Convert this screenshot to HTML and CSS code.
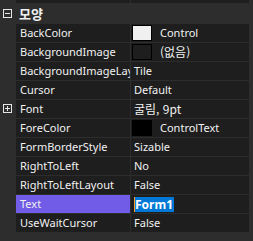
FILE: index.html
```html
<!DOCTYPE html>
<html lang="ko">
<head>
    <meta charset="UTF-8">
    <title>속성</title>
    <link rel="stylesheet" href="styles.css">
</head>
<body>
    <div class="grid">
        <div class="row partial">
            <div class="gutter"></div>
            <div class="name"></div>
            <div class="value"></div>
        </div>

        <div class="category">
            <span class="toggle minus"></span>
            <span class="cat-label">모양</span>
        </div>

        <div class="row">
            <div class="gutter"></div>
            <div class="name">BackColor</div>
            <div class="value"><span class="swatch light"></span>Control</div>
        </div>
        <div class="row">
            <div class="gutter"></div>
            <div class="name">BackgroundImage</div>
            <div class="value"><span class="swatch empty"></span><span class="ko">(없음)</span></div>
        </div>
        <div class="row">
            <div class="gutter"></div>
            <div class="name">BackgroundImageLayout</div>
            <div class="value">Tile</div>
        </div>
        <div class="row">
            <div class="gutter"></div>
            <div class="name">Cursor</div>
            <div class="value">Default</div>
        </div>
        <div class="row">
            <div class="gutter"><span class="toggle plus"></span></div>
            <div class="name">Font</div>
            <div class="value"><span class="ko">굴림, 9pt</span></div>
        </div>
        <div class="row">
            <div class="gutter"></div>
            <div class="name">ForeColor</div>
            <div class="value"><span class="swatch dark"></span>ControlText</div>
        </div>
        <div class="row">
            <div class="gutter"></div>
            <div class="name">FormBorderStyle</div>
            <div class="value">Sizable</div>
        </div>
        <div class="row">
            <div class="gutter"></div>
            <div class="name">RightToLeft</div>
            <div class="value">No</div>
        </div>
        <div class="row">
            <div class="gutter"></div>
            <div class="name">RightToLeftLayout</div>
            <div class="value">False</div>
        </div>
        <div class="row selected">
            <div class="gutter"></div>
            <div class="name">Text</div>
            <div class="value"><span class="edit">Form1</span></div>
        </div>
        <div class="row">
            <div class="gutter"></div>
            <div class="name">UseWaitCursor</div>
            <div class="value">False</div>
        </div>
    </div>
</body>
</html>
```

FILE: styles.css
```css
body {
    margin: 0;
    padding: 0;
    background: #2d2d2d;
    font-family: 'Noto Sans', 'Noto Sans CJK KR', sans-serif;
    font-size: 11px;
    color: #f1f1f1;
    overflow: hidden;
}

.grid {
    display: flex;
    flex-direction: column;
    gap: 1px;
    width: 253px;
    height: 241px;
}

.row {
    display: grid;
    grid-template-columns: 15px 114px 118px;
    column-gap: 1px;
    height: 18px;
    line-height: 18px;
}

.row.partial {
    height: 3px;
}

.gutter {
    background: #2d2d2d;
    position: relative;
}

.name,
.value {
    background: #1e1e1e;
    white-space: nowrap;
    overflow: hidden;
}

.name {
    padding-left: 4px;
}

.value {
    padding-left: 3px;
    display: flex;
    align-items: center;
}

.ko {
    font-family: 'Noto Sans CJK KR', sans-serif;
    font-size: 12px;
}

.category {
    height: 19px;
    display: flex;
    align-items: center;
    position: relative;
}

.cat-label {
    margin-left: 19px;
    font-family: 'Noto Sans CJK KR', sans-serif;
    font-weight: bold;
    font-size: 13px;
}

/* +/- boxes */
.toggle {
    position: absolute;
    left: 3px;
    width: 7px;
    height: 7px;
    border: 1px solid #e6e6e6;
}

.category .toggle {
    top: 5px;
}

.gutter .toggle {
    top: 4px;
}

.toggle::before,
.toggle::after {
    content: "";
    position: absolute;
    background: #e6e6e6;
}

.toggle::before {
    left: 1px;
    top: 3px;
    width: 5px;
    height: 1px;
}

.plus::after {
    left: 3px;
    top: 1px;
    width: 1px;
    height: 5px;
}

.swatch {
    width: 18px;
    height: 14px;
    border: 1px solid #000;
    margin-left: -2px;
    margin-right: 8px;
    flex: none;
}

.swatch.light {
    background: #f0f0f0;
}

.swatch.empty {
    background: #1e1e1e;
}

.swatch.dark {
    background: #000;
}

.selected .name {
    background: #705ce6;
}

.edit {
    background: #0078d7;
    color: #fff;
    font-weight: bold;
    font-size: 12px;
    line-height: 15px;
    padding-right: 1px;
    border-left: 1px solid #ff9a2e;
}
```
